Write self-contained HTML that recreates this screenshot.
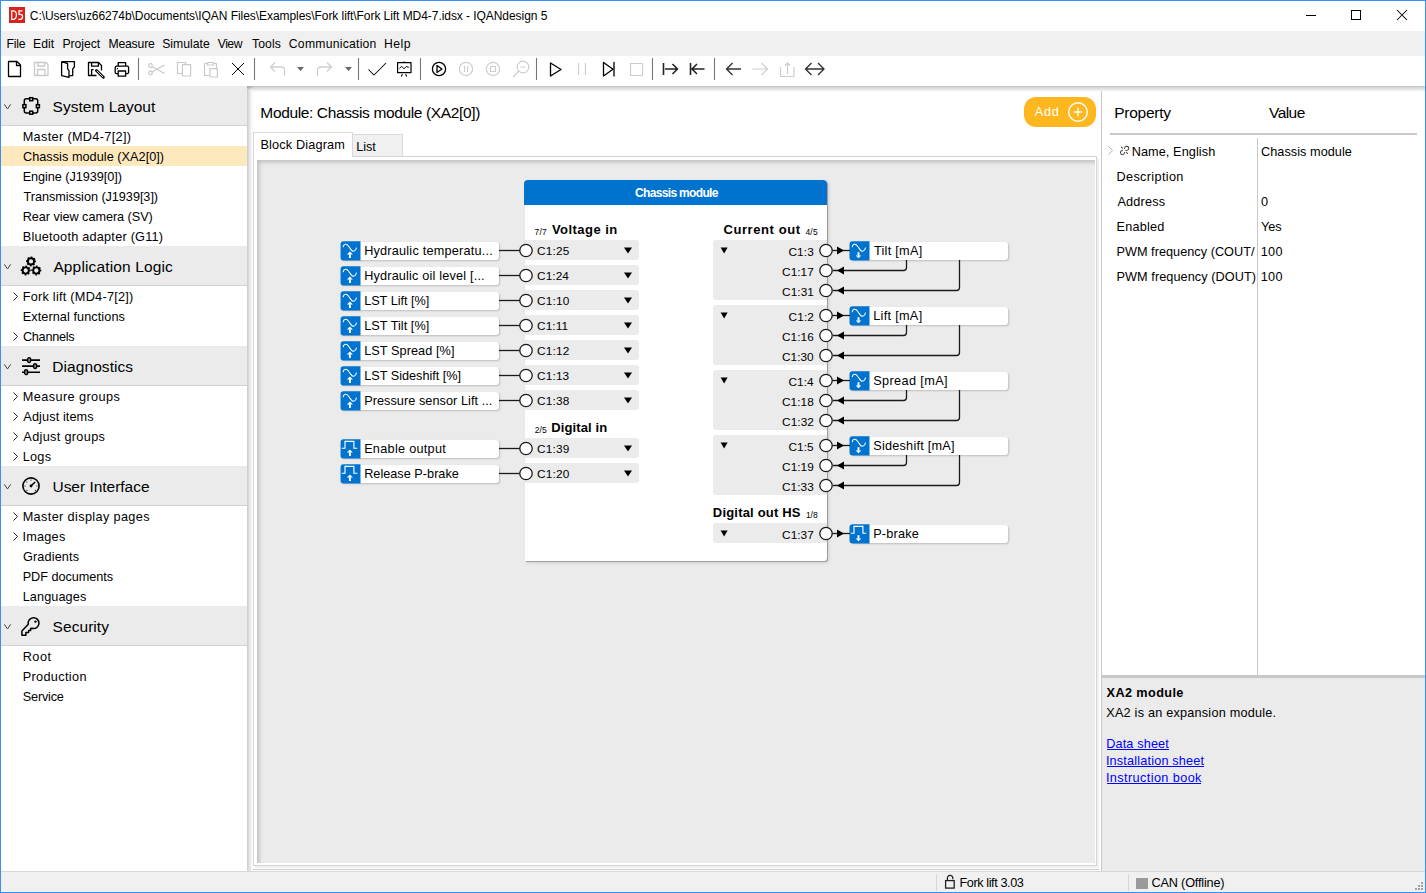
<!DOCTYPE html><html><head><meta charset="utf-8"><style>
*{margin:0;padding:0;box-sizing:border-box}
html,body{width:1426px;height:893px;overflow:hidden;background:#fff;font-family:"Liberation Sans", sans-serif;color:#000}
.abs{position:absolute}
svg{overflow:visible}
</style></head><body>

<div class="abs" style="left:0;top:0;width:1426px;height:893px;border:1px solid #3591f5"></div>
<div class="abs" style="left:9px;top:7px;width:16px;height:16px;background:#d6231b"></div>
<svg class="abs" style="left:0;top:0" width="30" height="30" viewBox="0 0 30 30"><g fill="none" stroke="#fff" stroke-width="1.25"><path d="M11.7 10.9H13.4Q16.4 10.9 16.4 15.1Q16.4 19.3 13.4 19.3H11.7Z"/><path d="M22.4 10.9H19V14.4H20.2Q22.6 14.4 22.6 16.85Q22.6 19.3 20.1 19.3H18.4"/></g></svg>
<div class="abs" style="left:1306px;top:15px;width:10px;height:1px;background:#000"></div>
<div class="abs" style="left:1351px;top:10px;width:10px;height:10px;border:1px solid #000"></div>
<svg class="abs" style="left:1396px;top:9px" width="13" height="13" viewBox="0 0 13 13"><path d="M1 1L11 11M11 1L1 11" stroke="#000" stroke-width="1.05"/></svg>
<div class="abs" style="left:1px;top:31px;width:1424px;height:25px;background:#f0f0f0"></div>
<svg class="abs" style="left:0;top:56px" width="840" height="30" viewBox="0 56 840 30"><g fill="none" stroke-linejoin="round">
<g stroke="#000" stroke-width="1.3">
<path d="M8.5 61.5H17L20.5 65V76.5H8.5Z"/><path d="M16.5 62V65.5H20"/>
</g>
<g stroke="#c9c9c9" stroke-width="1.3">
<path d="M34.5 62.5H46L48 64.5V75.5H34.5Z"/><path d="M38 62.5V66H44.5V62.5M37.5 75.5V69.5H45V75.5"/>
</g>
<g stroke="#000" stroke-width="1.3">
<path d="M61.6 62V75.6L69 77.4V70.6L67.6 68.8V63.6Q64.5 61.8 61.6 62Z"/><path d="M62 61.6H74.4V67L72.7 68.9V75.6H69.3"/>
</g>
<g stroke="#000" stroke-width="1.3">
<path d="M96.5 75.5H88.5V62.5H98.5L101.5 65.5V70.6"/><path d="M91.6 62.5V66.2H98.4V62.5M91.6 75.5V69.6H93.6"/>
<path d="M96.4 70.4L103.4 77.2" stroke-width="2.8" stroke-linecap="round"/><path d="M96.6 70.6L103.2 77" stroke="#fff" stroke-width="0.9"/>
</g>
<g stroke="#000" stroke-width="1.3">
<path d="M118.2 66V62.6H125.6V66"/><path d="M118.2 73.6H116.4Q115.2 73.6 115.2 72.2V67.5Q115.2 66.2 116.6 66.2H127.3Q128.6 66.2 128.6 67.5V72.2Q128.6 73.6 127.2 73.6H125.6"/><path d="M118.2 71H125.6V76.2H118.2Z"/><path d="M116.8 68.6H118"/>
</g>
<g stroke="#777" stroke-width="1.1">
<path d="M138.5 58V80M254.5 58V80M358.5 58V80M420.5 58V80M536.5 58V80M652.5 58V80M714.5 58V80"/>
</g>
<g stroke="#c9c9c9" stroke-width="1.2">
<circle cx="150.5" cy="65.5" r="1.8"/><circle cx="150.5" cy="73" r="1.8"/><path d="M152 66.5L164.5 73.5M152 72L164.5 65"/>
<path d="M182 73.5H177.5V62.5H185.6V64.6"/><path d="M182.4 64.6H190.6V76H182.4Z"/>
<path d="M207 63.5H204.5V75.5H209M214 63.5H216.5V68.5"/><path d="M207.5 62.5H213.5V65H207.5Z"/><path d="M210 68.6H217.4V77H210Z"/>
</g>
<g stroke="#000" stroke-width="1.0"><path d="M232 63L244 75M244 63L232 75"/></g>
<g stroke="#cfcfcf" stroke-width="1.3">
<path d="M284.5 76V70.5Q284.5 67 281 67H270.5M275 62.5L270.5 67L275 71.5"/>
<path d="M317.5 76V70.5Q317.5 67 321 67H331.5M327 62.5L331.5 67L327 71.5"/>
</g>
<g fill="#666" stroke="none"><path d="M297 67H304L300.5 71Z"/><path d="M345 67H352L348.5 71Z"/></g>
<g stroke="#000" stroke-width="1.3">
<path d="M368.5 69.5L374 75L386 63" stroke-width="1.05"/>
<path d="M397.6 62.6H411V72.6H397.6Z" stroke-width="1.2"/><path d="M399.4 68.4L401.6 66.3L404 68.8L406.3 66.5L408.8 67.4" stroke-width="1"/><path d="M402.4 74.2L401.3 76.6M405.6 74.2L406.7 76.6" stroke-width="1.1"/><path d="M404.3 61.5V62.6"/>
<circle cx="439" cy="69" r="6.6"/><path d="M437 65.5V72.5L442 69Z"/>
</g>
<g stroke="#cdcdcd" stroke-width="1.2">
<circle cx="466" cy="69" r="6.6"/><path d="M464.5 66V72M467.5 66V72"/>
<circle cx="493" cy="69" r="6.6"/><path d="M490.5 66.5H495.5V71.5H490.5Z"/>
<circle cx="523" cy="67" r="5.8"/><path d="M519 71L513 77M520.5 67H525.5"/>
<path d="M578.5 63V75M585.5 63V75"/>
<path d="M630.5 63.5H642.5V75.5H630.5Z"/>
<path d="M767 69H752.5M761.5 63L767.5 69L761.5 75"/>
<path d="M780.5 67V76.5H794V67M787.5 74V63M785 65.5L787.5 63L790 65.5"/>
</g>
<g stroke="#000" stroke-width="1.3">
<path d="M550.5 63V76L561 69.5Z"/>
<path d="M603.5 62.5V76L613 69.3Z"/><path d="M614 62V76.5"/>
</g>
<g stroke="#222" stroke-width="1.6">
<path d="M663.5 63V75M665 69H677.5M672.5 64L677.5 69L672.5 74"/>
<path d="M690.5 63V75M704.5 69H692M697 64L692 69L697 74"/>
</g>
<g stroke="#333" stroke-width="1.4">
<path d="M741 69H727M732.5 63L726.5 69L732.5 75"/>
<path d="M806 69H823.5M811.5 63L805.5 69L811.5 75M818 63L824 69L818 75"/>
</g>
</g>
</svg>
<div class="abs" style="left:1px;top:86px;width:1424px;height:785px;background:#f0f0f0"></div>
<div class="abs" style="left:1px;top:86px;width:246px;height:785px;background:#fff"></div>
<div class="abs" style="left:1px;top:86px;width:246px;height:40px;background:#ebebeb;border-bottom:1px solid #d0d0d0"></div>
<svg class="abs" style="left:4px;top:104px" width="8" height="6" viewBox="0 0 8 6"><path d="M0.3 0.3L3.5 5L6.7 0.3" fill="none" stroke="#444" stroke-width="1"/></svg>
<svg class="abs" style="left:21px;top:96px" width="20" height="20" viewBox="0 0 20 20"><g fill="none" stroke="#000" stroke-width="1.5"><path d="M8 2.8H5.3Q3.3 2.8 3.3 4.8V8M12 2.8H14.7Q16.7 2.8 16.7 4.8V8M3.3 12V15Q3.3 17 5.3 17H8M16.7 12V15Q16.7 17 14.7 17H12"/><rect x="8.7" y="1.7" width="3" height="3"/><rect x="8.7" y="15.2" width="3" height="3"/><rect x="1.9" y="8.7" width="3" height="3"/><rect x="15.4" y="8.7" width="3" height="3"/></g></svg>
<div class="abs" style="left:1px;top:146px;width:246px;height:20px;background:#fee9bf"></div>
<div class="abs" style="left:1px;top:246px;width:246px;height:40px;background:#ebebeb;border-bottom:1px solid #d0d0d0"></div>
<svg class="abs" style="left:4px;top:264px" width="8" height="6" viewBox="0 0 8 6"><path d="M0.3 0.3L3.5 5L6.7 0.3" fill="none" stroke="#444" stroke-width="1"/></svg>
<svg class="abs" style="left:21px;top:256px" width="20" height="20" viewBox="0 0 20 20"><g fill="none" stroke="#000"><circle cx="10" cy="5.4" r="3.1" stroke-width="1.9"/><circle cx="10" cy="5.4" r="4.3" stroke-width="1.4" stroke-dasharray="1.69 1.69" transform="rotate(-11 10 5.4)"/><circle cx="4.7" cy="14.5" r="3.1" stroke-width="1.9"/><circle cx="4.7" cy="14.5" r="4.3" stroke-width="1.4" stroke-dasharray="1.69 1.69" transform="rotate(-11 4.7 14.5)"/><circle cx="15.3" cy="14.5" r="3.1" stroke-width="1.9"/><circle cx="15.3" cy="14.5" r="4.3" stroke-width="1.4" stroke-dasharray="1.69 1.69" transform="rotate(-11 15.3 14.5)"/></g></svg>
<svg class="abs" style="left:13px;top:292px" width="5" height="9" viewBox="0 0 5 9"><path d="M0.5 0.5L4.5 4.5L0.5 8.5" fill="none" stroke="#222" stroke-width="1"/></svg>
<svg class="abs" style="left:13px;top:332px" width="5" height="9" viewBox="0 0 5 9"><path d="M0.5 0.5L4.5 4.5L0.5 8.5" fill="none" stroke="#222" stroke-width="1"/></svg>
<div class="abs" style="left:1px;top:346px;width:246px;height:40px;background:#ebebeb;border-bottom:1px solid #d0d0d0"></div>
<svg class="abs" style="left:4px;top:364px" width="8" height="6" viewBox="0 0 8 6"><path d="M0.3 0.3L3.5 5L6.7 0.3" fill="none" stroke="#444" stroke-width="1"/></svg>
<svg class="abs" style="left:21px;top:356px" width="20" height="20" viewBox="0 0 20 20"><g stroke="#000" stroke-width="1.6"><path d="M1 4.1H19M1 10.1H19M1 16.2H19"/></g><g fill="#777" stroke="#000" stroke-width="1.3"><ellipse cx="8.1" cy="4.1" rx="1.7" ry="2.5"/><ellipse cx="14.1" cy="10.1" rx="1.7" ry="2.5"/><ellipse cx="5.1" cy="16.2" rx="1.7" ry="2.5"/></g></svg>
<svg class="abs" style="left:13px;top:392px" width="5" height="9" viewBox="0 0 5 9"><path d="M0.5 0.5L4.5 4.5L0.5 8.5" fill="none" stroke="#222" stroke-width="1"/></svg>
<svg class="abs" style="left:13px;top:412px" width="5" height="9" viewBox="0 0 5 9"><path d="M0.5 0.5L4.5 4.5L0.5 8.5" fill="none" stroke="#222" stroke-width="1"/></svg>
<svg class="abs" style="left:13px;top:432px" width="5" height="9" viewBox="0 0 5 9"><path d="M0.5 0.5L4.5 4.5L0.5 8.5" fill="none" stroke="#222" stroke-width="1"/></svg>
<svg class="abs" style="left:13px;top:452px" width="5" height="9" viewBox="0 0 5 9"><path d="M0.5 0.5L4.5 4.5L0.5 8.5" fill="none" stroke="#222" stroke-width="1"/></svg>
<div class="abs" style="left:1px;top:466px;width:246px;height:40px;background:#ebebeb;border-bottom:1px solid #d0d0d0"></div>
<svg class="abs" style="left:4px;top:484px" width="8" height="6" viewBox="0 0 8 6"><path d="M0.3 0.3L3.5 5L6.7 0.3" fill="none" stroke="#444" stroke-width="1"/></svg>
<svg class="abs" style="left:21px;top:476px" width="20" height="20" viewBox="0 0 20 20"><g fill="none" stroke="#000"><circle cx="10" cy="10" r="8.1" stroke-width="1.6"/><path d="M10 10L14.1 6" stroke-width="1.6"/></g><g fill="#000"><circle cx="10" cy="10" r="1.4"/><circle cx="10" cy="4" r="0.6"/><circle cx="5.8" cy="6" r="0.6"/><circle cx="4" cy="10" r="0.6"/><circle cx="16" cy="10" r="0.6"/><circle cx="6" cy="14.3" r="0.6"/><circle cx="14.3" cy="14.3" r="0.6"/></g></svg>
<svg class="abs" style="left:13px;top:512px" width="5" height="9" viewBox="0 0 5 9"><path d="M0.5 0.5L4.5 4.5L0.5 8.5" fill="none" stroke="#222" stroke-width="1"/></svg>
<svg class="abs" style="left:13px;top:532px" width="5" height="9" viewBox="0 0 5 9"><path d="M0.5 0.5L4.5 4.5L0.5 8.5" fill="none" stroke="#222" stroke-width="1"/></svg>
<div class="abs" style="left:1px;top:606px;width:246px;height:40px;background:#ebebeb;border-bottom:1px solid #d0d0d0"></div>
<svg class="abs" style="left:4px;top:624px" width="8" height="6" viewBox="0 0 8 6"><path d="M0.3 0.3L3.5 5L6.7 0.3" fill="none" stroke="#444" stroke-width="1"/></svg>
<svg class="abs" style="left:21px;top:616px" width="20" height="20" viewBox="0 0 20 20"><g fill="none" stroke="#000" stroke-width="1.5" stroke-linejoin="round"><path d="M7.3 8.2A5.4 5.4 0 1 1 11.2 12.3L9.6 12.6V14.5H7.6V16.6H4.9V19.3H0.9V15Z"/></g><circle cx="14.5" cy="5.6" r="1.2" fill="#000"/></svg>
<div class="abs" style="left:247px;top:86px;width:854px;height:785px;background:#fff"></div>
<div class="abs" style="left:247px;top:86px;width:6px;height:785px;background:linear-gradient(90deg,#cacaca,#e0e0e0 35%,#f3f3f3 70%,rgba(255,255,255,0))"></div>
<div class="abs" style="left:1024px;top:97px;width:72px;height:30px;border-radius:12px;background:#feb71e"></div>
<svg class="abs" style="left:1067px;top:101px" width="22" height="22" viewBox="0 0 22 22"><circle cx="11" cy="11" r="9.3" fill="none" stroke="#fff" stroke-width="1.4"/><path d="M11 6.6V15.4M6.6 11H15.4" stroke="#fff" stroke-width="1.4"/></svg>
<div class="abs" style="left:253px;top:156px;width:844px;height:710px;border:1px solid #d5d5d5;background:#fff;box-shadow:2px 2px 0 #f0f0f0"></div>
<div class="abs" style="left:253px;top:132px;width:100px;height:25px;border:1px solid #d9d9d9;border-bottom:none;background:#fff"></div>
<div class="abs" style="left:352px;top:134px;width:51px;height:22px;border:1px solid #d9d9d9;border-bottom:none;background:#f0f0f0"></div>
<div class="abs" style="left:253px;top:869px;width:846px;height:1px;background:#cdcdcd"></div>
<div class="abs" style="left:257px;top:160px;width:838px;height:703px;background:#ebebeb;box-shadow:inset 4px 4px 4px -2px rgba(0,0,0,0.2)"></div>
<div class="abs" style="left:525px;top:180px;width:302px;height:381px;background:#fff;border-radius:4px 4px 3px 0;box-shadow:1px 1px 0.5px rgba(0,0,0,0.25), 1.5px 1.5px 3px rgba(0,0,0,0.12)"></div>
<div class="abs" style="left:524px;top:180px;width:303px;height:25px;background:#0073cf;border-radius:4px 4px 0 0"></div>
<div class="abs" style="left:525px;top:240px;width:114px;height:20px;background:#ebebeb;border-radius:0 3px 3px 0"></div>
<div class="abs" style="left:340px;top:242px;width:159px;height:18px;background:#fff;border-radius:3px;box-shadow:1px 1px 2px rgba(0,0,0,0.2)"></div>
<svg class="abs" style="left:340px;top:241px" width="21" height="20" viewBox="0 0 21 20"><path d="M3.5 0.3H20.5V19.4H3.5A3 3 0 0 1 0.5 16.4V3.3A3 3 0 0 1 3.5 0.3Z" fill="#0073cf"/><path d="M3.1 6.3C3.6 2.6 6.6 2.2 8.6 5.2L11 8.6C12.8 11.3 15.8 10.6 16.5 6.6" fill="none" stroke="#fff" stroke-width="1.05"/><path d="M9.9 13.2V17" stroke="#fff" stroke-width="1.9"/><path d="M6.9 13.6L9.9 10.6L12.9 13.6Z" fill="#fff"/></svg>
<div class="abs" style="left:525px;top:265px;width:114px;height:20px;background:#ebebeb;border-radius:0 3px 3px 0"></div>
<div class="abs" style="left:340px;top:267px;width:159px;height:18px;background:#fff;border-radius:3px;box-shadow:1px 1px 2px rgba(0,0,0,0.2)"></div>
<svg class="abs" style="left:340px;top:266px" width="21" height="20" viewBox="0 0 21 20"><path d="M3.5 0.3H20.5V19.4H3.5A3 3 0 0 1 0.5 16.4V3.3A3 3 0 0 1 3.5 0.3Z" fill="#0073cf"/><path d="M3.1 6.3C3.6 2.6 6.6 2.2 8.6 5.2L11 8.6C12.8 11.3 15.8 10.6 16.5 6.6" fill="none" stroke="#fff" stroke-width="1.05"/><path d="M9.9 13.2V17" stroke="#fff" stroke-width="1.9"/><path d="M6.9 13.6L9.9 10.6L12.9 13.6Z" fill="#fff"/></svg>
<div class="abs" style="left:525px;top:290px;width:114px;height:20px;background:#ebebeb;border-radius:0 3px 3px 0"></div>
<div class="abs" style="left:340px;top:292px;width:159px;height:18px;background:#fff;border-radius:3px;box-shadow:1px 1px 2px rgba(0,0,0,0.2)"></div>
<svg class="abs" style="left:340px;top:291px" width="21" height="20" viewBox="0 0 21 20"><path d="M3.5 0.3H20.5V19.4H3.5A3 3 0 0 1 0.5 16.4V3.3A3 3 0 0 1 3.5 0.3Z" fill="#0073cf"/><path d="M3.1 6.3C3.6 2.6 6.6 2.2 8.6 5.2L11 8.6C12.8 11.3 15.8 10.6 16.5 6.6" fill="none" stroke="#fff" stroke-width="1.05"/><path d="M9.9 13.2V17" stroke="#fff" stroke-width="1.9"/><path d="M6.9 13.6L9.9 10.6L12.9 13.6Z" fill="#fff"/></svg>
<div class="abs" style="left:525px;top:315px;width:114px;height:20px;background:#ebebeb;border-radius:0 3px 3px 0"></div>
<div class="abs" style="left:340px;top:317px;width:159px;height:18px;background:#fff;border-radius:3px;box-shadow:1px 1px 2px rgba(0,0,0,0.2)"></div>
<svg class="abs" style="left:340px;top:316px" width="21" height="20" viewBox="0 0 21 20"><path d="M3.5 0.3H20.5V19.4H3.5A3 3 0 0 1 0.5 16.4V3.3A3 3 0 0 1 3.5 0.3Z" fill="#0073cf"/><path d="M3.1 6.3C3.6 2.6 6.6 2.2 8.6 5.2L11 8.6C12.8 11.3 15.8 10.6 16.5 6.6" fill="none" stroke="#fff" stroke-width="1.05"/><path d="M9.9 13.2V17" stroke="#fff" stroke-width="1.9"/><path d="M6.9 13.6L9.9 10.6L12.9 13.6Z" fill="#fff"/></svg>
<div class="abs" style="left:525px;top:340px;width:114px;height:20px;background:#ebebeb;border-radius:0 3px 3px 0"></div>
<div class="abs" style="left:340px;top:342px;width:159px;height:18px;background:#fff;border-radius:3px;box-shadow:1px 1px 2px rgba(0,0,0,0.2)"></div>
<svg class="abs" style="left:340px;top:341px" width="21" height="20" viewBox="0 0 21 20"><path d="M3.5 0.3H20.5V19.4H3.5A3 3 0 0 1 0.5 16.4V3.3A3 3 0 0 1 3.5 0.3Z" fill="#0073cf"/><path d="M3.1 6.3C3.6 2.6 6.6 2.2 8.6 5.2L11 8.6C12.8 11.3 15.8 10.6 16.5 6.6" fill="none" stroke="#fff" stroke-width="1.05"/><path d="M9.9 13.2V17" stroke="#fff" stroke-width="1.9"/><path d="M6.9 13.6L9.9 10.6L12.9 13.6Z" fill="#fff"/></svg>
<div class="abs" style="left:525px;top:365px;width:114px;height:20px;background:#ebebeb;border-radius:0 3px 3px 0"></div>
<div class="abs" style="left:340px;top:367px;width:159px;height:18px;background:#fff;border-radius:3px;box-shadow:1px 1px 2px rgba(0,0,0,0.2)"></div>
<svg class="abs" style="left:340px;top:366px" width="21" height="20" viewBox="0 0 21 20"><path d="M3.5 0.3H20.5V19.4H3.5A3 3 0 0 1 0.5 16.4V3.3A3 3 0 0 1 3.5 0.3Z" fill="#0073cf"/><path d="M3.1 6.3C3.6 2.6 6.6 2.2 8.6 5.2L11 8.6C12.8 11.3 15.8 10.6 16.5 6.6" fill="none" stroke="#fff" stroke-width="1.05"/><path d="M9.9 13.2V17" stroke="#fff" stroke-width="1.9"/><path d="M6.9 13.6L9.9 10.6L12.9 13.6Z" fill="#fff"/></svg>
<div class="abs" style="left:525px;top:390px;width:114px;height:20px;background:#ebebeb;border-radius:0 3px 3px 0"></div>
<div class="abs" style="left:340px;top:392px;width:159px;height:18px;background:#fff;border-radius:3px;box-shadow:1px 1px 2px rgba(0,0,0,0.2)"></div>
<svg class="abs" style="left:340px;top:391px" width="21" height="20" viewBox="0 0 21 20"><path d="M3.5 0.3H20.5V19.4H3.5A3 3 0 0 1 0.5 16.4V3.3A3 3 0 0 1 3.5 0.3Z" fill="#0073cf"/><path d="M3.1 6.3C3.6 2.6 6.6 2.2 8.6 5.2L11 8.6C12.8 11.3 15.8 10.6 16.5 6.6" fill="none" stroke="#fff" stroke-width="1.05"/><path d="M9.9 13.2V17" stroke="#fff" stroke-width="1.9"/><path d="M6.9 13.6L9.9 10.6L12.9 13.6Z" fill="#fff"/></svg>
<div class="abs" style="left:525px;top:438px;width:114px;height:20px;background:#ebebeb;border-radius:0 3px 3px 0"></div>
<div class="abs" style="left:340px;top:440px;width:159px;height:18px;background:#fff;border-radius:3px;box-shadow:1px 1px 2px rgba(0,0,0,0.2)"></div>
<svg class="abs" style="left:340px;top:439px" width="21" height="20" viewBox="0 0 21 20"><path d="M3.5 0.3H20.5V19.4H3.5A3 3 0 0 1 0.5 16.4V3.3A3 3 0 0 1 3.5 0.3Z" fill="#0073cf"/><path d="M1.7 9.2H5V2.4H13.9V9.2H17.3" fill="none" stroke="#fff" stroke-width="1.15"/><path d="M9.9 13.2V17" stroke="#fff" stroke-width="1.9"/><path d="M6.9 13.6L9.9 10.6L12.9 13.6Z" fill="#fff"/></svg>
<div class="abs" style="left:525px;top:463px;width:114px;height:20px;background:#ebebeb;border-radius:0 3px 3px 0"></div>
<div class="abs" style="left:340px;top:465px;width:159px;height:18px;background:#fff;border-radius:3px;box-shadow:1px 1px 2px rgba(0,0,0,0.2)"></div>
<svg class="abs" style="left:340px;top:464px" width="21" height="20" viewBox="0 0 21 20"><path d="M3.5 0.3H20.5V19.4H3.5A3 3 0 0 1 0.5 16.4V3.3A3 3 0 0 1 3.5 0.3Z" fill="#0073cf"/><path d="M1.7 9.2H5V2.4H13.9V9.2H17.3" fill="none" stroke="#fff" stroke-width="1.15"/><path d="M9.9 13.2V17" stroke="#fff" stroke-width="1.9"/><path d="M6.9 13.6L9.9 10.6L12.9 13.6Z" fill="#fff"/></svg>
<div class="abs" style="left:713px;top:240px;width:114px;height:60px;background:#ebebeb;border-radius:3px 0 0 3px"></div>
<div class="abs" style="left:850px;top:242px;width:158px;height:18px;background:#fff;border-radius:3px;box-shadow:1px 1px 2px rgba(0,0,0,0.2)"></div>
<svg class="abs" style="left:849px;top:241px" width="21" height="20" viewBox="0 0 21 20"><path d="M3.5 0.3H20.5V19.4H3.5A3 3 0 0 1 0.5 16.4V3.3A3 3 0 0 1 3.5 0.3Z" fill="#0073cf"/><path d="M3.1 6.3C3.6 2.6 6.6 2.2 8.6 5.2L11 8.6C12.8 11.3 15.8 10.6 16.5 6.6" fill="none" stroke="#fff" stroke-width="1.05"/><path d="M9.5 11.2V14.7" stroke="#fff" stroke-width="1.9"/><path d="M6.7 14.4L9.5 17.3L12.3 14.4Z" fill="#fff"/></svg>
<div class="abs" style="left:713px;top:305px;width:114px;height:60px;background:#ebebeb;border-radius:3px 0 0 3px"></div>
<div class="abs" style="left:850px;top:307px;width:158px;height:18px;background:#fff;border-radius:3px;box-shadow:1px 1px 2px rgba(0,0,0,0.2)"></div>
<svg class="abs" style="left:849px;top:306px" width="21" height="20" viewBox="0 0 21 20"><path d="M3.5 0.3H20.5V19.4H3.5A3 3 0 0 1 0.5 16.4V3.3A3 3 0 0 1 3.5 0.3Z" fill="#0073cf"/><path d="M3.1 6.3C3.6 2.6 6.6 2.2 8.6 5.2L11 8.6C12.8 11.3 15.8 10.6 16.5 6.6" fill="none" stroke="#fff" stroke-width="1.05"/><path d="M9.5 11.2V14.7" stroke="#fff" stroke-width="1.9"/><path d="M6.7 14.4L9.5 17.3L12.3 14.4Z" fill="#fff"/></svg>
<div class="abs" style="left:713px;top:370px;width:114px;height:60px;background:#ebebeb;border-radius:3px 0 0 3px"></div>
<div class="abs" style="left:850px;top:372px;width:158px;height:18px;background:#fff;border-radius:3px;box-shadow:1px 1px 2px rgba(0,0,0,0.2)"></div>
<svg class="abs" style="left:849px;top:371px" width="21" height="20" viewBox="0 0 21 20"><path d="M3.5 0.3H20.5V19.4H3.5A3 3 0 0 1 0.5 16.4V3.3A3 3 0 0 1 3.5 0.3Z" fill="#0073cf"/><path d="M3.1 6.3C3.6 2.6 6.6 2.2 8.6 5.2L11 8.6C12.8 11.3 15.8 10.6 16.5 6.6" fill="none" stroke="#fff" stroke-width="1.05"/><path d="M9.5 11.2V14.7" stroke="#fff" stroke-width="1.9"/><path d="M6.7 14.4L9.5 17.3L12.3 14.4Z" fill="#fff"/></svg>
<div class="abs" style="left:713px;top:435px;width:114px;height:60px;background:#ebebeb;border-radius:3px 0 0 3px"></div>
<div class="abs" style="left:850px;top:437px;width:158px;height:18px;background:#fff;border-radius:3px;box-shadow:1px 1px 2px rgba(0,0,0,0.2)"></div>
<svg class="abs" style="left:849px;top:436px" width="21" height="20" viewBox="0 0 21 20"><path d="M3.5 0.3H20.5V19.4H3.5A3 3 0 0 1 0.5 16.4V3.3A3 3 0 0 1 3.5 0.3Z" fill="#0073cf"/><path d="M3.1 6.3C3.6 2.6 6.6 2.2 8.6 5.2L11 8.6C12.8 11.3 15.8 10.6 16.5 6.6" fill="none" stroke="#fff" stroke-width="1.05"/><path d="M9.5 11.2V14.7" stroke="#fff" stroke-width="1.9"/><path d="M6.7 14.4L9.5 17.3L12.3 14.4Z" fill="#fff"/></svg>
<div class="abs" style="left:713px;top:523px;width:114px;height:20px;background:#ebebeb;border-radius:3px 0 0 3px"></div>
<div class="abs" style="left:850px;top:525px;width:158px;height:18px;background:#fff;border-radius:3px;box-shadow:1px 1px 2px rgba(0,0,0,0.2)"></div>
<svg class="abs" style="left:849px;top:524px" width="21" height="20" viewBox="0 0 21 20"><path d="M3.5 0.3H20.5V19.4H3.5A3 3 0 0 1 0.5 16.4V3.3A3 3 0 0 1 3.5 0.3Z" fill="#0073cf"/><path d="M1.7 9.2H5V2.4H13.9V9.2H17.3" fill="none" stroke="#fff" stroke-width="1.15"/><path d="M9.5 11.2V14.7" stroke="#fff" stroke-width="1.9"/><path d="M6.7 14.4L9.5 17.3L12.3 14.4Z" fill="#fff"/></svg>
<svg class="abs" style="left:0;top:0" width="1426" height="893"><g fill="none" stroke="#1a1a1a" stroke-width="1.3"><path d="M499 250.5H520"/><circle cx="526" cy="250.5" r="6.2" fill="#fff"/><path d="M624 247.5H632L628 253.5Z" fill="#000" stroke="none"/><path d="M499 275.5H520"/><circle cx="526" cy="275.5" r="6.2" fill="#fff"/><path d="M624 272.5H632L628 278.5Z" fill="#000" stroke="none"/><path d="M499 300.5H520"/><circle cx="526" cy="300.5" r="6.2" fill="#fff"/><path d="M624 297.5H632L628 303.5Z" fill="#000" stroke="none"/><path d="M499 325.5H520"/><circle cx="526" cy="325.5" r="6.2" fill="#fff"/><path d="M624 322.5H632L628 328.5Z" fill="#000" stroke="none"/><path d="M499 350.5H520"/><circle cx="526" cy="350.5" r="6.2" fill="#fff"/><path d="M624 347.5H632L628 353.5Z" fill="#000" stroke="none"/><path d="M499 375.5H520"/><circle cx="526" cy="375.5" r="6.2" fill="#fff"/><path d="M624 372.5H632L628 378.5Z" fill="#000" stroke="none"/><path d="M499 400.5H520"/><circle cx="526" cy="400.5" r="6.2" fill="#fff"/><path d="M624 397.5H632L628 403.5Z" fill="#000" stroke="none"/><path d="M499 448.5H520"/><circle cx="526" cy="448.5" r="6.2" fill="#fff"/><path d="M624 445.5H632L628 451.5Z" fill="#000" stroke="none"/><path d="M499 473.5H520"/><circle cx="526" cy="473.5" r="6.2" fill="#fff"/><path d="M624 470.5H632L628 476.5Z" fill="#000" stroke="none"/><path d="M720.6 247.5H727.6L724.1 253.5Z" fill="#000" stroke="none"/><path d="M832 250.5H850"/><path d="M837 246.5L844 250.5L837 254.5Z" fill="#000" stroke="none"/><path d="M906.5 260V267.5Q906.5 270.5 903.5 270.5H833"/><path d="M959.5 260V287.5Q959.5 290.5 956.5 290.5H833"/><path d="M837 270.5L844 266.5L844 274.5Z" fill="#000" stroke="none"/><path d="M837 290.5L844 286.5L844 294.5Z" fill="#000" stroke="none"/><circle cx="826" cy="250.5" r="6.2" fill="#fff"/><circle cx="826" cy="270.5" r="6.2" fill="#fff"/><circle cx="826" cy="290.5" r="6.2" fill="#fff"/><path d="M720.6 312.5H727.6L724.1 318.5Z" fill="#000" stroke="none"/><path d="M832 315.5H850"/><path d="M837 311.5L844 315.5L837 319.5Z" fill="#000" stroke="none"/><path d="M906.5 325V332.5Q906.5 335.5 903.5 335.5H833"/><path d="M959.5 325V352.5Q959.5 355.5 956.5 355.5H833"/><path d="M837 335.5L844 331.5L844 339.5Z" fill="#000" stroke="none"/><path d="M837 355.5L844 351.5L844 359.5Z" fill="#000" stroke="none"/><circle cx="826" cy="315.5" r="6.2" fill="#fff"/><circle cx="826" cy="335.5" r="6.2" fill="#fff"/><circle cx="826" cy="355.5" r="6.2" fill="#fff"/><path d="M720.6 377.5H727.6L724.1 383.5Z" fill="#000" stroke="none"/><path d="M832 380.5H850"/><path d="M837 376.5L844 380.5L837 384.5Z" fill="#000" stroke="none"/><path d="M906.5 390V397.5Q906.5 400.5 903.5 400.5H833"/><path d="M959.5 390V417.5Q959.5 420.5 956.5 420.5H833"/><path d="M837 400.5L844 396.5L844 404.5Z" fill="#000" stroke="none"/><path d="M837 420.5L844 416.5L844 424.5Z" fill="#000" stroke="none"/><circle cx="826" cy="380.5" r="6.2" fill="#fff"/><circle cx="826" cy="400.5" r="6.2" fill="#fff"/><circle cx="826" cy="420.5" r="6.2" fill="#fff"/><path d="M720.6 442.5H727.6L724.1 448.5Z" fill="#000" stroke="none"/><path d="M832 445.5H850"/><path d="M837 441.5L844 445.5L837 449.5Z" fill="#000" stroke="none"/><path d="M906.5 455V462.5Q906.5 465.5 903.5 465.5H833"/><path d="M959.5 455V482.5Q959.5 485.5 956.5 485.5H833"/><path d="M837 465.5L844 461.5L844 469.5Z" fill="#000" stroke="none"/><path d="M837 485.5L844 481.5L844 489.5Z" fill="#000" stroke="none"/><circle cx="826" cy="445.5" r="6.2" fill="#fff"/><circle cx="826" cy="465.5" r="6.2" fill="#fff"/><circle cx="826" cy="485.5" r="6.2" fill="#fff"/><path d="M720.6 530.5H727.6L724.1 536.5Z" fill="#000" stroke="none"/><path d="M832 533.5H850"/><path d="M837 529.5L844 533.5L837 537.5Z" fill="#000" stroke="none"/><circle cx="826" cy="533.5" r="6.2" fill="#fff"/></g></svg>
<div class="abs" style="left:1101px;top:86px;width:324px;height:785px;background:#fff;border-left:1px solid #c8c8c8"></div>
<div class="abs" style="left:247px;top:86px;width:1178px;height:6px;background:linear-gradient(#c6c6c6,#d9d9d9 35%,#efefef 70%,rgba(255,255,255,0))"></div>
<div class="abs" style="left:247px;top:86px;width:6px;height:6px;background:linear-gradient(135deg,rgba(0,0,0,0.22),rgba(0,0,0,0) 70%)"></div>
<div class="abs" style="left:1110px;top:133px;width:307px;height:2px;background:#c8c8c8"></div>
<div class="abs" style="left:1257px;top:138px;width:1px;height:537px;background:#c8c8c8"></div>
<svg class="abs" style="left:1104px;top:142px" width="30" height="18" viewBox="0 0 30 18"><path d="M4.4 4.4L8.6 8.5L4.4 12.6" fill="none" stroke="#b4b4b4" stroke-width="1"/><g fill="none" stroke="#444" stroke-width="1.05" stroke-linecap="round"><path d="M20.4 6.5Q20.9 4.4 22.6 4.3Q24.8 4.5 24.8 6.5Q24.5 8.5 21.8 8.5"/><path d="M18.5 8.3Q16.5 8.8 16.4 10.5Q16.8 12.8 18.6 12.7Q20.5 12.5 20.6 10.3"/><path d="M17.4 5.1L18.4 6.2M22.4 10.3L23.5 11.5"/></g></svg>
<div class="abs" style="left:1102px;top:675px;width:323px;height:3px;background:#c8c8c8"></div>
<div class="abs" style="left:1102px;top:678px;width:323px;height:193px;background:#ebebeb"></div>
<div class="abs" style="left:1107px;top:749px;width:62px;height:1px;background:#0000ff"></div>
<div class="abs" style="left:1107px;top:766px;width:97px;height:1px;background:#0000ff"></div>
<div class="abs" style="left:1107px;top:783px;width:94px;height:1px;background:#0000ff"></div>
<div class="abs" style="left:1px;top:871px;width:1424px;height:1px;background:#d7d7d7"></div>
<div class="abs" style="left:1px;top:872px;width:1424px;height:20px;background:#f0f0f0"></div>
<div class="abs" style="left:936px;top:874px;width:1px;height:17px;background:#d7d7d7"></div>
<div class="abs" style="left:1128px;top:874px;width:1px;height:17px;background:#d7d7d7"></div>
<svg class="abs" style="left:944px;top:875px" width="12" height="15" viewBox="0 0 12 15"><g fill="none" stroke="#222" stroke-width="1.3"><rect x="1.6" y="5.6" width="8.6" height="7.5"/><path d="M3.4 5.6V3.4A2.7 2.7 0 0 1 8.8 2.9V4.2"/></g></svg>
<div class="abs" style="left:1136px;top:878px;width:12px;height:11px;background:#9a9a9a"></div>
<svg class="abs" style="left:1413px;top:882px" width="11" height="9" viewBox="0 0 11 9"><rect x="8" y="0" width="2" height="2" fill="#a0a0a0"/><rect x="5" y="3" width="2" height="2" fill="#a0a0a0"/><rect x="8" y="3" width="2" height="2" fill="#a0a0a0"/><rect x="2" y="6" width="2" height="2" fill="#a0a0a0"/><rect x="5" y="6" width="2" height="2" fill="#a0a0a0"/><rect x="8" y="6" width="2" height="2" fill="#a0a0a0"/></svg>
<svg class="abs" style="left:0;top:0;pointer-events:none" width="1426" height="893"><text x="29.83" y="20" fill="#000" style="font-family:'Liberation Sans';font-size:12px;font-weight:400;letter-spacing:-0.058px" xml:space="preserve">C:\Users\uz66274b\Documents\IQAN Files\Examples\Fork lift\Fork Lift MD4-7.idsx - IQANdesign 5</text><text x="6.58" y="48" fill="#000" style="font-family:'Liberation Sans';font-size:12.2px;font-weight:400;letter-spacing:-0.207px" xml:space="preserve">File</text><text x="33.04" y="48" fill="#000" style="font-family:'Liberation Sans';font-size:12.2px;font-weight:400;letter-spacing:0.019px" xml:space="preserve">Edit</text><text x="62.44" y="48" fill="#000" style="font-family:'Liberation Sans';font-size:12.2px;font-weight:400;letter-spacing:-0.045px" xml:space="preserve">Project</text><text x="108.44" y="48" fill="#000" style="font-family:'Liberation Sans';font-size:12.2px;font-weight:400;letter-spacing:-0.175px" xml:space="preserve">Measure</text><text x="162.13" y="48" fill="#000" style="font-family:'Liberation Sans';font-size:12.2px;font-weight:400;letter-spacing:0.036px" xml:space="preserve">Simulate</text><text x="217.75" y="48" fill="#000" style="font-family:'Liberation Sans';font-size:12.2px;font-weight:400;letter-spacing:-0.503px" xml:space="preserve">View</text><text x="252.09" y="48" fill="#000" style="font-family:'Liberation Sans';font-size:12.2px;font-weight:400;letter-spacing:0.072px" xml:space="preserve">Tools</text><text x="288.84" y="48" fill="#000" style="font-family:'Liberation Sans';font-size:12.2px;font-weight:400;letter-spacing:0.240px" xml:space="preserve">Communication</text><text x="384.04" y="48" fill="#000" style="font-family:'Liberation Sans';font-size:12.2px;font-weight:400;letter-spacing:0.479px" xml:space="preserve">Help</text><text x="52.62" y="112" fill="#000" style="font-family:'Liberation Sans';font-size:15.5px;font-weight:400;letter-spacing:0.006px" xml:space="preserve">System Layout</text><text x="22.69" y="141" fill="#000" style="font-family:'Liberation Sans';font-size:12.7px;font-weight:400;letter-spacing:0.342px" xml:space="preserve">Master (MD4-7[2])</text><text x="22.96" y="161" fill="#000" style="font-family:'Liberation Sans';font-size:12.7px;font-weight:400;letter-spacing:0.036px" xml:space="preserve">Chassis module (XA2[0])</text><text x="22.69" y="181" fill="#000" style="font-family:'Liberation Sans';font-size:12.7px;font-weight:400;letter-spacing:-0.053px" xml:space="preserve">Engine (J1939[0])</text><text x="23.50" y="201" fill="#000" style="font-family:'Liberation Sans';font-size:12.7px;font-weight:400;letter-spacing:-0.047px" xml:space="preserve">Transmission (J1939[3])</text><text x="22.69" y="221" fill="#000" style="font-family:'Liberation Sans';font-size:12.7px;font-weight:400;letter-spacing:-0.051px" xml:space="preserve">Rear view camera (SV)</text><text x="22.69" y="241" fill="#000" style="font-family:'Liberation Sans';font-size:12.7px;font-weight:400;letter-spacing:0.237px" xml:space="preserve">Bluetooth adapter (G11)</text><text x="53.38" y="272" fill="#000" style="font-family:'Liberation Sans';font-size:15.5px;font-weight:400;letter-spacing:0.143px" xml:space="preserve">Application Logic</text><text x="22.69" y="301" fill="#000" style="font-family:'Liberation Sans';font-size:12.7px;font-weight:400;letter-spacing:0.256px" xml:space="preserve">Fork lift (MD4-7[2])</text><text x="22.69" y="321" fill="#000" style="font-family:'Liberation Sans';font-size:12.7px;font-weight:400;letter-spacing:0.079px" xml:space="preserve">External functions</text><text x="22.96" y="341" fill="#000" style="font-family:'Liberation Sans';font-size:12.7px;font-weight:400;letter-spacing:-0.276px" xml:space="preserve">Channels</text><text x="52.35" y="372" fill="#000" style="font-family:'Liberation Sans';font-size:15.5px;font-weight:400;letter-spacing:0.062px" xml:space="preserve">Diagnostics</text><text x="22.69" y="401" fill="#000" style="font-family:'Liberation Sans';font-size:12.7px;font-weight:400;letter-spacing:0.424px" xml:space="preserve">Measure groups</text><text x="23.37" y="421" fill="#000" style="font-family:'Liberation Sans';font-size:12.7px;font-weight:400;letter-spacing:0.106px" xml:space="preserve">Adjust items</text><text x="23.37" y="441" fill="#000" style="font-family:'Liberation Sans';font-size:12.7px;font-weight:400;letter-spacing:0.327px" xml:space="preserve">Adjust groups</text><text x="22.69" y="461" fill="#000" style="font-family:'Liberation Sans';font-size:12.7px;font-weight:400;letter-spacing:0.276px" xml:space="preserve">Logs</text><text x="52.46" y="492" fill="#000" style="font-family:'Liberation Sans';font-size:15.5px;font-weight:400;letter-spacing:-0.019px" xml:space="preserve">User Interface</text><text x="22.69" y="521" fill="#000" style="font-family:'Liberation Sans';font-size:12.7px;font-weight:400;letter-spacing:0.368px" xml:space="preserve">Master display pages</text><text x="22.47" y="541" fill="#000" style="font-family:'Liberation Sans';font-size:12.7px;font-weight:400;letter-spacing:0.232px" xml:space="preserve">Images</text><text x="22.96" y="561" fill="#000" style="font-family:'Liberation Sans';font-size:12.7px;font-weight:400;letter-spacing:0.136px" xml:space="preserve">Gradients</text><text x="22.69" y="581" fill="#000" style="font-family:'Liberation Sans';font-size:12.7px;font-weight:400;letter-spacing:-0.049px" xml:space="preserve">PDF documents</text><text x="22.69" y="601" fill="#000" style="font-family:'Liberation Sans';font-size:12.7px;font-weight:400;letter-spacing:0.098px" xml:space="preserve">Languages</text><text x="52.62" y="632" fill="#000" style="font-family:'Liberation Sans';font-size:15.5px;font-weight:400;letter-spacing:0.050px" xml:space="preserve">Security</text><text x="22.69" y="661" fill="#000" style="font-family:'Liberation Sans';font-size:12.7px;font-weight:400;letter-spacing:0.519px" xml:space="preserve">Root</text><text x="22.69" y="681" fill="#000" style="font-family:'Liberation Sans';font-size:12.7px;font-weight:400;letter-spacing:0.345px" xml:space="preserve">Production</text><text x="22.81" y="701" fill="#000" style="font-family:'Liberation Sans';font-size:12.7px;font-weight:400;letter-spacing:-0.204px" xml:space="preserve">Service</text><text x="260.33" y="118" fill="#000" style="font-family:'Liberation Sans';font-size:15.5px;font-weight:400;letter-spacing:-0.363px" xml:space="preserve">Module: Chassis module (XA2[0])</text><text x="1034.76" y="116" fill="#fff" style="font-family:'Liberation Sans';font-size:12.7px;font-weight:400;letter-spacing:0.784px" xml:space="preserve">Add</text><text x="260.48" y="149" fill="#000" style="font-family:'Liberation Sans';font-size:12.7px;font-weight:400;letter-spacing:0.160px" xml:space="preserve">Block Diagram</text><text x="356.31" y="151" fill="#000" style="font-family:'Liberation Sans';font-size:12.7px;font-weight:400;letter-spacing:-0.079px" xml:space="preserve">List</text><text x="634.99" y="197" fill="#fff" style="font-family:'Liberation Sans';font-size:12px;font-weight:700;letter-spacing:-0.659px" xml:space="preserve">Chassis module</text><text x="534.41" y="235" fill="#000" style="font-family:'Liberation Sans';font-size:8.5px;font-weight:400;letter-spacing:0.252px" xml:space="preserve">7/7</text><text x="551.93" y="234" fill="#000" style="font-family:'Liberation Sans';font-size:13px;font-weight:700;letter-spacing:0.462px" xml:space="preserve">Voltage in</text><text x="534.82" y="433" fill="#000" style="font-family:'Liberation Sans';font-size:8.5px;font-weight:400;letter-spacing:0.003px" xml:space="preserve">2/5</text><text x="551.14" y="432" fill="#000" style="font-family:'Liberation Sans';font-size:13px;font-weight:700;letter-spacing:0.140px" xml:space="preserve">Digital in</text><text x="723.52" y="234" fill="#000" style="font-family:'Liberation Sans';font-size:13px;font-weight:700;letter-spacing:0.572px" xml:space="preserve">Current out</text><text x="805.47" y="235" fill="#000" style="font-family:'Liberation Sans';font-size:8.5px;font-weight:400;letter-spacing:0.175px" xml:space="preserve">4/5</text><text x="712.82" y="517" fill="#000" style="font-family:'Liberation Sans';font-size:13px;font-weight:700;letter-spacing:0.191px" xml:space="preserve">Digital out HS</text><text x="805.89" y="518" fill="#000" style="font-family:'Liberation Sans';font-size:8.5px;font-weight:400;letter-spacing:0.014px" xml:space="preserve">1/8</text><text x="364.13" y="255" fill="#000" style="font-family:'Liberation Sans';font-size:12.7px;font-weight:400;letter-spacing:0.215px" xml:space="preserve">Hydraulic temperatu...</text><text x="537.06" y="255" fill="#000" style="font-family:'Liberation Sans';font-size:11.8px;font-weight:400;letter-spacing:0.190px" xml:space="preserve">C1:25</text><text x="364.13" y="280" fill="#000" style="font-family:'Liberation Sans';font-size:12.7px;font-weight:400;letter-spacing:0.180px" xml:space="preserve">Hydraulic oil level [...</text><text x="537.06" y="280" fill="#000" style="font-family:'Liberation Sans';font-size:11.8px;font-weight:400;letter-spacing:0.098px" xml:space="preserve">C1:24</text><text x="364.13" y="305" fill="#000" style="font-family:'Liberation Sans';font-size:12.7px;font-weight:400;letter-spacing:-0.015px" xml:space="preserve">LST Lift [%]</text><text x="537.06" y="305" fill="#000" style="font-family:'Liberation Sans';font-size:11.8px;font-weight:400;letter-spacing:0.186px" xml:space="preserve">C1:10</text><text x="364.13" y="330" fill="#000" style="font-family:'Liberation Sans';font-size:12.7px;font-weight:400;letter-spacing:0.044px" xml:space="preserve">LST Tilt [%]</text><text x="537.06" y="330" fill="#000" style="font-family:'Liberation Sans';font-size:11.8px;font-weight:400;letter-spacing:0.115px" xml:space="preserve">C1:11</text><text x="364.13" y="355" fill="#000" style="font-family:'Liberation Sans';font-size:12.7px;font-weight:400;letter-spacing:0.077px" xml:space="preserve">LST Spread [%]</text><text x="537.06" y="355" fill="#000" style="font-family:'Liberation Sans';font-size:11.8px;font-weight:400;letter-spacing:0.222px" xml:space="preserve">C1:12</text><text x="364.13" y="380" fill="#000" style="font-family:'Liberation Sans';font-size:12.7px;font-weight:400;letter-spacing:-0.004px" xml:space="preserve">LST Sideshift [%]</text><text x="537.06" y="380" fill="#000" style="font-family:'Liberation Sans';font-size:11.8px;font-weight:400;letter-spacing:0.162px" xml:space="preserve">C1:13</text><text x="364.13" y="405" fill="#000" style="font-family:'Liberation Sans';font-size:12.7px;font-weight:400;letter-spacing:0.057px" xml:space="preserve">Pressure sensor Lift ...</text><text x="537.06" y="405" fill="#000" style="font-family:'Liberation Sans';font-size:11.8px;font-weight:400;letter-spacing:0.190px" xml:space="preserve">C1:38</text><text x="364.13" y="453" fill="#000" style="font-family:'Liberation Sans';font-size:12.7px;font-weight:400;letter-spacing:0.282px" xml:space="preserve">Enable output</text><text x="537.06" y="453" fill="#000" style="font-family:'Liberation Sans';font-size:11.8px;font-weight:400;letter-spacing:0.204px" xml:space="preserve">C1:39</text><text x="364.13" y="478" fill="#000" style="font-family:'Liberation Sans';font-size:12.7px;font-weight:400;letter-spacing:0.017px" xml:space="preserve">Release P-brake</text><text x="537.06" y="478" fill="#000" style="font-family:'Liberation Sans';font-size:11.8px;font-weight:400;letter-spacing:0.186px" xml:space="preserve">C1:20</text><text x="788.51" y="256" fill="#000" style="font-family:'Liberation Sans';font-size:11.8px;font-weight:400;letter-spacing:0.093px" xml:space="preserve">C1:3</text><text x="782.06" y="276" fill="#000" style="font-family:'Liberation Sans';font-size:11.8px;font-weight:400;letter-spacing:0.064px" xml:space="preserve">C1:17</text><text x="782.06" y="296" fill="#000" style="font-family:'Liberation Sans';font-size:11.8px;font-weight:400;letter-spacing:0.075px" xml:space="preserve">C1:31</text><text x="873.94" y="255" fill="#000" style="font-family:'Liberation Sans';font-size:12.7px;font-weight:400;letter-spacing:0.273px" xml:space="preserve">Tilt [mA]</text><text x="788.51" y="321" fill="#000" style="font-family:'Liberation Sans';font-size:11.8px;font-weight:400;letter-spacing:0.155px" xml:space="preserve">C1:2</text><text x="782.06" y="341" fill="#000" style="font-family:'Liberation Sans';font-size:11.8px;font-weight:400;letter-spacing:0.041px" xml:space="preserve">C1:16</text><text x="782.06" y="361" fill="#000" style="font-family:'Liberation Sans';font-size:11.8px;font-weight:400;letter-spacing:0.017px" xml:space="preserve">C1:30</text><text x="873.13" y="320" fill="#000" style="font-family:'Liberation Sans';font-size:12.7px;font-weight:400;letter-spacing:0.313px" xml:space="preserve">Lift [mA]</text><text x="788.51" y="386" fill="#000" style="font-family:'Liberation Sans';font-size:11.8px;font-weight:400;letter-spacing:0.043px" xml:space="preserve">C1:4</text><text x="782.06" y="406" fill="#000" style="font-family:'Liberation Sans';font-size:11.8px;font-weight:400;letter-spacing:0.041px" xml:space="preserve">C1:18</text><text x="782.06" y="426" fill="#000" style="font-family:'Liberation Sans';font-size:11.8px;font-weight:400;letter-spacing:0.088px" xml:space="preserve">C1:32</text><text x="873.24" y="385" fill="#000" style="font-family:'Liberation Sans';font-size:12.7px;font-weight:400;letter-spacing:0.374px" xml:space="preserve">Spread [mA]</text><text x="788.51" y="451" fill="#000" style="font-family:'Liberation Sans';font-size:11.8px;font-weight:400;letter-spacing:0.081px" xml:space="preserve">C1:5</text><text x="782.06" y="471" fill="#000" style="font-family:'Liberation Sans';font-size:11.8px;font-weight:400;letter-spacing:0.064px" xml:space="preserve">C1:19</text><text x="782.06" y="491" fill="#000" style="font-family:'Liberation Sans';font-size:11.8px;font-weight:400;letter-spacing:0.041px" xml:space="preserve">C1:33</text><text x="873.24" y="450" fill="#000" style="font-family:'Liberation Sans';font-size:12.7px;font-weight:400;letter-spacing:0.230px" xml:space="preserve">Sideshift [mA]</text><text x="782.06" y="539" fill="#000" style="font-family:'Liberation Sans';font-size:11.8px;font-weight:400;letter-spacing:0.064px" xml:space="preserve">C1:37</text><text x="873.13" y="538" fill="#000" style="font-family:'Liberation Sans';font-size:12.7px;font-weight:400;letter-spacing:0.223px" xml:space="preserve">P-brake</text><text x="1114.18" y="118" fill="#000" style="font-family:'Liberation Sans';font-size:15.5px;font-weight:400;letter-spacing:-0.249px" xml:space="preserve">Property</text><text x="1269.10" y="118" fill="#000" style="font-family:'Liberation Sans';font-size:15.5px;font-weight:400;letter-spacing:-0.581px" xml:space="preserve">Value</text><text x="1131.69" y="156" fill="#000" style="font-family:'Liberation Sans';font-size:12.7px;font-weight:400;letter-spacing:0.084px" xml:space="preserve">Name, English</text><text x="1260.97" y="156" fill="#000" style="font-family:'Liberation Sans';font-size:12.7px;font-weight:400;letter-spacing:0.051px" xml:space="preserve">Chassis module</text><text x="1116.48" y="181" fill="#000" style="font-family:'Liberation Sans';font-size:12.7px;font-weight:400;letter-spacing:0.350px" xml:space="preserve">Description</text><text x="1117.46" y="206" fill="#000" style="font-family:'Liberation Sans';font-size:12.7px;font-weight:400;letter-spacing:0.175px" xml:space="preserve">Address</text><text x="1261.03" y="206" fill="#000" style="font-family:'Liberation Sans';font-size:12.7px;font-weight:400;letter-spacing:0.000px" xml:space="preserve">0</text><text x="1116.48" y="231" fill="#000" style="font-family:'Liberation Sans';font-size:12.7px;font-weight:400;letter-spacing:0.204px" xml:space="preserve">Enabled</text><text x="1260.89" y="231" fill="#000" style="font-family:'Liberation Sans';font-size:12.7px;font-weight:400;letter-spacing:-0.012px" xml:space="preserve">Yes</text><text x="1116.48" y="256" fill="#000" style="font-family:'Liberation Sans';font-size:12.7px;font-weight:400;letter-spacing:0.028px" xml:space="preserve">PWM frequency (COUT/</text><text x="1260.69" y="256" fill="#000" style="font-family:'Liberation Sans';font-size:12.7px;font-weight:400;letter-spacing:0.350px" xml:space="preserve">100</text><text x="1116.48" y="281" fill="#000" style="font-family:'Liberation Sans';font-size:12.7px;font-weight:400;letter-spacing:0.071px" xml:space="preserve">PWM frequency (DOUT)</text><text x="1260.69" y="281" fill="#000" style="font-family:'Liberation Sans';font-size:12.7px;font-weight:400;letter-spacing:0.350px" xml:space="preserve">100</text><text x="1106.57" y="697" fill="#000" style="font-family:'Liberation Sans';font-size:12.7px;font-weight:700;letter-spacing:0.390px" xml:space="preserve">XA2 module</text><text x="1106.29" y="717" fill="#000" style="font-family:'Liberation Sans';font-size:12.7px;font-weight:400;letter-spacing:0.208px" xml:space="preserve">XA2 is an expansion module.</text><text x="1106.13" y="748" fill="#0000ff" style="font-family:'Liberation Sans';font-size:12.7px;font-weight:400;letter-spacing:0.147px" xml:space="preserve">Data sheet</text><text x="1105.88" y="765" fill="#0000ff" style="font-family:'Liberation Sans';font-size:12.7px;font-weight:400;letter-spacing:0.173px" xml:space="preserve">Installation sheet</text><text x="1105.88" y="782" fill="#0000ff" style="font-family:'Liberation Sans';font-size:12.7px;font-weight:400;letter-spacing:0.399px" xml:space="preserve">Instruction book</text><text x="959.49" y="887" fill="#000" style="font-family:'Liberation Sans';font-size:12.7px;font-weight:400;letter-spacing:-0.416px" xml:space="preserve">Fork lift 3.03</text><text x="1151.47" y="887" fill="#000" style="font-family:'Liberation Sans';font-size:12.7px;font-weight:400;letter-spacing:-0.173px" xml:space="preserve">CAN (Offline)</text></svg>
</body></html>
